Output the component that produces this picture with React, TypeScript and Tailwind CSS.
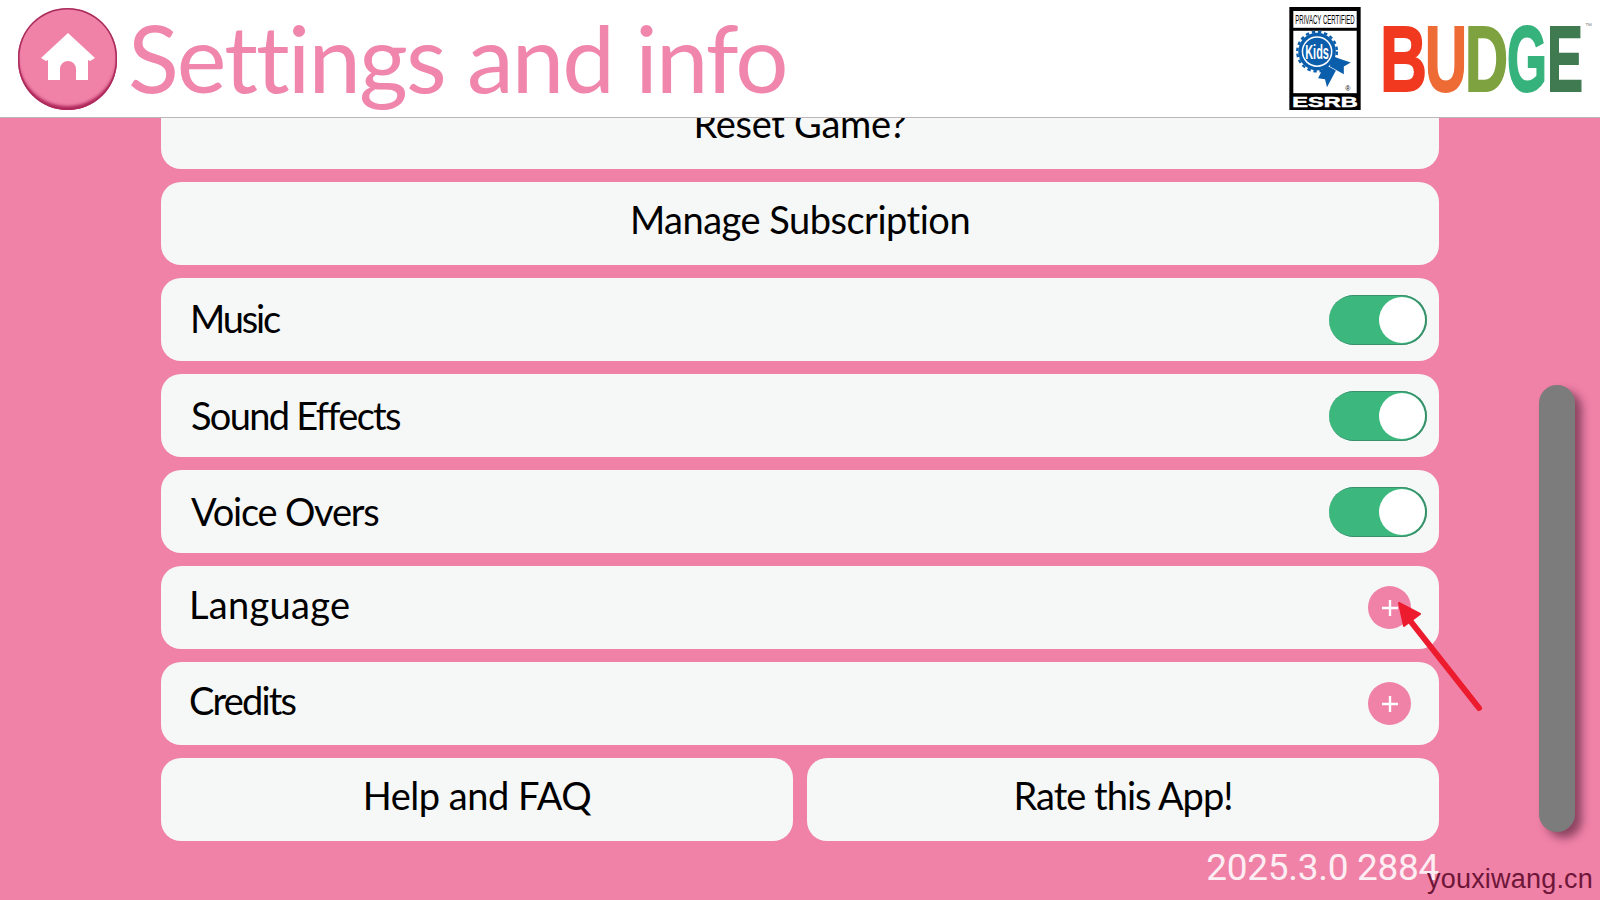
import React from "react";

function Toggle() {
  return (
    <div className="flex h-[50px] w-[98px] items-center justify-end rounded-full bg-[#3cb87f] pr-[2px] shadow-[inset_-1px_0_0_1px_#3a8f6a]">
      <div className="h-[46px] w-[46px] rounded-full bg-white" />
    </div>
  );
}

function Plus() {
  return (
    <div className="flex h-[43px] w-[43px] items-center justify-center rounded-full bg-[#f081a7]">
      <svg width="20" height="20" viewBox="0 0 20 20">
        <path d="M10 2v16M2 10h16" stroke="#fff" strokeWidth="2.4" />
      </svg>
    </div>
  );
}

function Row({ label, right, cls, textCls }: { label: string; right: React.ReactNode; cls: string; textCls: string }) {
  return (
    <div className={`flex h-[83px] items-center justify-between rounded-[20px] bg-[#f6f7f7] text-[38px] text-black ${cls}`}>
      <span className={textCls}>{label}</span>
      {right}
    </div>
  );
}

function Center({ label, className = "", textCls }: { label: string; className?: string; textCls: string }) {
  return (
    <div className={`flex h-[83px] items-center justify-center rounded-[20px] bg-[#f6f7f7] text-[38px] text-black ${className}`}>
      <span className={textCls}>{label}</span>
    </div>
  );
}

function EsrbLogo() {
  return (
    <svg width="72" height="103" viewBox="0 0 72 104">
      <rect width="72" height="104" fill="#000" />
      <rect x="4" y="4" width="64" height="17" fill="#fff" />
      <text x="36" y="17" textAnchor="middle" fontFamily="Liberation Sans" fontSize="13" textLength="60" lengthAdjust="spacingAndGlyphs" fill="#000">PRIVACY CERTIFIED</text>
      <rect x="4" y="24" width="64" height="63" fill="#fff" />
      <path d="M36 58 L29 72 L36 73 L38 81 L47 64 Z" fill="#0b5eab" />
      <path d="M44 50 L62 56 L55 60 L55 68 L41 60 Z" fill="#0b5eab" />
      <circle cx="28" cy="45" r="19" fill="#0b5eab" />
      <circle cx="28" cy="45" r="20" fill="none" stroke="#0b5eab" strokeWidth="2.4" strokeDasharray="3.5 2.8" />
      <circle cx="28" cy="45" r="15.5" fill="#fff" />
      <circle cx="28" cy="45" r="14" fill="#0b5eab" />
      <text x="28" y="52" textAnchor="middle" fontFamily="Liberation Sans" fontWeight="700" fontSize="20" textLength="24" lengthAdjust="spacingAndGlyphs" fill="#fff">Kids</text>
      <text x="59" y="85" textAnchor="middle" fontFamily="Liberation Sans" fontSize="7" fill="#000">®</text>
      <text x="36" y="101" textAnchor="middle" fontFamily="Liberation Sans" fontWeight="700" fontSize="14" textLength="66" lengthAdjust="spacingAndGlyphs" fill="#fff" stroke="#fff" strokeWidth="0.5">ESRB</text>
    </svg>
  );
}

function BudgeLogo() {
  const letters: [string, number, number, string][] = [
    ["B", -2, 47, "#f0391f"],
    ["U", 43, 42, "#ee6b36"],
    ["D", 83, 43, "#7ea23f"],
    ["G", 125, 40, "#36b27c"],
    ["E", 165, 36, "#3f7a50"],
  ];
  return (
    <svg width="212" height="76" viewBox="0 0 212 76" className="overflow-visible">
      {letters.map(([c, x, w, col]) => (
        <text key={c} x={x} y="70" fontFamily="Liberation Sans" fontWeight="700" fontSize="92" textLength={w} lengthAdjust="spacingAndGlyphs" fill={col} stroke={col} strokeWidth="2">
          {c}
        </text>
      ))}
      <text x="203" y="7" fontFamily="Liberation Sans" fontSize="7" fill="#888">™</text>
    </svg>
  );
}

export default function App() {
  return (
    <div className="relative flex h-[900px] w-[1600px] flex-col overflow-hidden bg-[#f081a7] font-['Lato','Open_Sans',sans-serif] [font-variant-ligatures:none]">
      <header className="flex h-[118px] shrink-0 items-center border-b border-[#bdb7ba] bg-white pl-[18px]">
        <div className="flex h-[102px] w-[99px] shrink-0 items-center justify-center rounded-full bg-[#f081a7] shadow-[inset_0_-4px_3px_#b02a5c,inset_0_0_0_1.5px_#a82f5c]">
          <svg width="56" height="50" viewBox="0 0 56 50" className="-translate-y-[2px]">
            <path d="M28 1 L55 26 L50 29 L48 28 V48 H36 V37 a8 8 0 0 0 -16 0 V48 H8 V28 L6 29 L1 26 Z" fill="#fff" strokeLinejoin="round" />
          </svg>
        </div>
        <h1 className="ml-[11px] -translate-y-[2px] text-[94px] leading-none font-normal tracking-[-1.9px] text-[#f086ac]">Settings and info</h1>
        <div className="ml-auto mr-[6px] flex items-center gap-[21px]">
          <EsrbLogo />
          <BudgeLogo />
        </div>
      </header>

      <main className="flex flex-col gap-[13px] overflow-hidden px-[161px]">
        <Center label="Reset Game?" className="-mt-[32px] shrink-0" textCls="-translate-y-[4px] tracking-[-0.3px]" />
        <Center label="Manage Subscription" textCls="-translate-y-[4px] tracking-[-0.5px]" />
        <Row label="Music" cls="pl-[29px] pr-3" textCls="-translate-y-px tracking-[-2.2px]" right={<Toggle />} />
        <Row label="Sound Effects" cls="pl-[30px] pr-3" textCls="tracking-[-1.7px]" right={<Toggle />} />
        <Row label="Voice Overs" cls="pl-[30px] pr-3" textCls="tracking-[-1.2px]" right={<Toggle />} />
        <Row label="Language" cls="pl-[28px] pr-[28px]" textCls="-translate-y-[3px] tracking-[0.3px]" right={<Plus />} />
        <Row label="Credits" cls="pl-[28px] pr-[28px]" textCls="-translate-y-[3px] tracking-[-1.8px]" right={<Plus />} />
        <div className="grid grid-cols-2 gap-[14px]">
          <Center label="Help and FAQ" textCls="-translate-y-[4px] tracking-[-0.5px]" />
          <Center label="Rate this App!" textCls="-translate-y-[4px] tracking-[-1px]" />
        </div>
        <div className="-mt-[9px] text-right font-['Roboto',sans-serif] text-[37px] leading-[46px] font-normal tracking-[-0.3px] text-[#fdeef3]">
          2025.3.0 2884
        </div>
      </main>

      {/* scrollbar */}
      <div className="absolute left-[1539px] top-[385px] h-[447px] w-[36px] rounded-full bg-[#7c7c7c] shadow-[7px_6px_8px_rgba(60,20,40,0.55)]" />

      {/* annotation arrow */}
      <svg className="absolute left-0 top-0" width="1600" height="900" viewBox="0 0 1600 900">
        <path d="M1479 708 L1408 618" stroke="#ec1c2e" strokeWidth="6" strokeLinecap="round" />
        <path d="M1399 603 L1420 614 L1404 626 Z" fill="#ec1c2e" stroke="#ec1c2e" strokeWidth="2" strokeLinejoin="round" />
      </svg>

      {/* watermark */}
      <div className="absolute left-[1427px] top-[862px] font-['Liberation_Sans',sans-serif] text-[27px] leading-[34px] tracking-[0.2px] text-[#6d1638]">
        youxiwang.cn
      </div>
    </div>
  );
}
